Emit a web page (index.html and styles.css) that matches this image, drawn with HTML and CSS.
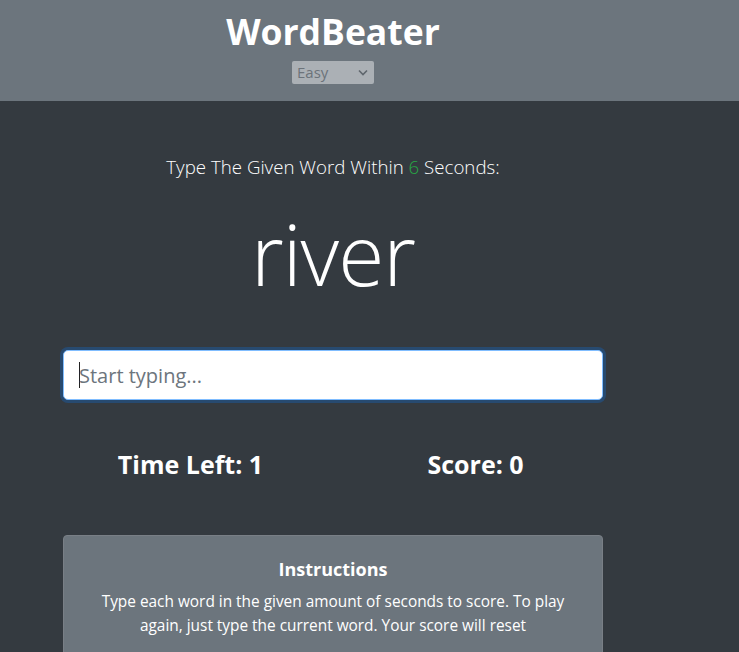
FILE: index.html
```html
<!DOCTYPE html>
<html lang="en">
<head>
<meta charset="utf-8">
<title>WordBeater</title>
<link rel="stylesheet" href="styles.css">
</head>
<body>
<header class="top">
  <div class="wrap top-inner">
    <h1 class="brand">WordBeater</h1>
    <div class="select">Easy <svg class="chev" width="10" height="7" viewBox="0 0 10 7"><path d="M1 1.5 L5 5.5 L9 1.5" fill="none" stroke="#5f666d" stroke-width="1.6"/></svg></div>
  </div>
</header>
<main class="main">
  <div class="wrap">
    <p class="lead">Type The Given Word Within <span class="green">6</span> Seconds:</p>
    <h2 class="word">river</h2>
    <div class="field"><span class="caret"></span><span class="ph">Start typing...</span></div>
    <div class="stats">
      <h3 class="stat stat-l">Time Left: 1</h3>
      <h3 class="stat stat-r">Score: 0</h3>
    </div>
    <section class="card">
      <h5 class="card-title">Instructions</h5>
      <p class="card-text">Type each word in the given amount of seconds to score. To play again, just type the current word. Your score will reset</p>
    </section>
  </div>
</main>
</body>
</html>
```
FILE: styles.css
```css
* { box-sizing: border-box; }
html, body { margin: 0; padding: 0; }
body {
  height: 652px;
  overflow: hidden;
  background: #343a40;
  color: #fff;
  font-family: "Open Sans", "Noto Sans", sans-serif;
}
.wrap {
  width: 540px;
  margin-left: 63px;
}
.top {
  background: #6c757d;
  height: 101px;
}
.top-inner {
  display: flex;
  flex-direction: column;
  align-items: center;
  padding-top: 7px;
}
.brand {
  margin: 0;
  font-size: 35.5px;
  font-weight: 700;
  line-height: 48px;
}
.select {
  margin-top: 6px;
  width: 82px;
  height: 23px;
  background: #abb0b5;
  border-radius: 2px;
  color: #6c737a;
  font-size: 15px;
  line-height: 23px;
  padding-left: 5px;
  display: flex;
  align-items: center;
  justify-content: space-between;
  padding-right: 6px;
}
.main { padding-top: 51px; }
.lead {
  margin: 0;
  text-align: center;
  font-size: 18.7px;
  font-weight: 300;
  line-height: 30px;
}
.green { color: #28a745; }
.word {
  margin: 22px 0 0;
  text-align: center;
  font-size: 84px;
  font-weight: 300;
  line-height: 100px;
  letter-spacing: -1px;
}
.field {
  margin-top: 46px;
  height: 50px;
  background: #fff;
  border: 1px solid #80bdff;
  border-radius: 5px;
  box-shadow: 0 0 0 3px rgba(0, 123, 255, 0.25);
  display: flex;
  align-items: center;
  padding-left: 15px;
  font-size: 20px;
  color: #6c757d;
}
.caret {
  width: 1px;
  height: 26px;
  background: #222;
  margin-right: -1px;
}
.stats {
  display: flex;
  margin-top: 44px;
}
.stat {
  margin: 0;
  font-size: 25px;
  font-weight: 700;
  line-height: 40px;
  flex: 1;
  text-align: center;
}
.stat-l { padding-right: 16px; }
.stat-r { padding-left: 14px; }
.card {
  margin-top: 51px;
  background: #6c757d;
  border: 1px solid #797f86;
  border-radius: 4px;
  padding: 18px 20px 30px;
  text-align: center;
}
.card-title {
  margin: 0 0 6px;
  font-size: 18px;
  font-weight: 700;
  line-height: 30px;
}
.card-text {
  margin: 0;
  font-size: 15.4px;
  line-height: 24px;
}
```
